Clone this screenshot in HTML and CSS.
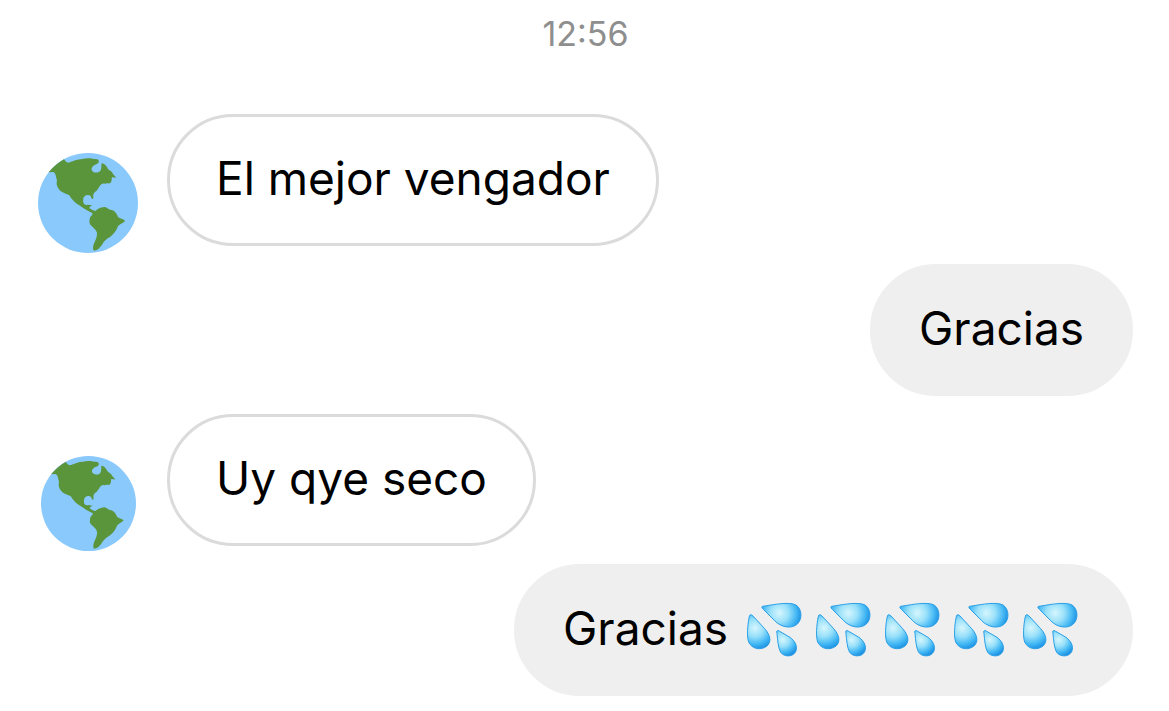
FILE: index.html
```html
<!DOCTYPE html>
<html lang="es">
<head>
<meta charset="utf-8">
<meta name="viewport" content="width=device-width, initial-scale=1">
<title>Chat</title>
<link rel="stylesheet" href="styles.css">
</head>
<body>
<svg class="defs" aria-hidden="true">
  <defs>
    <radialGradient id="water-wide" gradientUnits="userSpaceOnUse" cx="118" cy="58" r="68">
      <stop offset="0" stop-color="#d6f6fd"/>
      <stop offset="0.4" stop-color="#9be1fa"/>
      <stop offset="0.75" stop-color="#45b8f4"/>
      <stop offset="1" stop-color="#1b8de0"/>
    </radialGradient>
    <radialGradient id="water-tall" gradientUnits="userSpaceOnUse" cx="45" cy="103" r="66">
      <stop offset="0" stop-color="#d6f6fd"/>
      <stop offset="0.4" stop-color="#98e0fa"/>
      <stop offset="0.75" stop-color="#3fb6f4"/>
      <stop offset="1" stop-color="#1b8de0"/>
    </radialGradient>
    <radialGradient id="water-small" gradientUnits="userSpaceOnUse" cx="128" cy="138" r="52">
      <stop offset="0" stop-color="#d6f6fd"/>
      <stop offset="0.4" stop-color="#98e0fa"/>
      <stop offset="0.75" stop-color="#3fb6f4"/>
      <stop offset="1" stop-color="#1b8de0"/>
    </radialGradient>
    <symbol id="globe" viewBox="24 24 300 300">
      <circle cx="174" cy="174" r="150" fill="#89c9fb"/>
      <path fill="#5b953b" d="M56 82C70 65 86 52 102 43C106 47 108 53 115 53C130 49 142 42 157 42C172 37 188 41 202 43C209 46 207 54 202 56C193 59 184 65 185 74C188 84 202 85 210 79C216 73 213 63 215 55C224 56 229 63 234 72C241 78 246 79 249 87L259 98L246 97C244 103 247 108 241 114C236 117 230 113 226 117C219 114 213 117 209 124L200 137C192 142 188 147 190 157C190 164 186 163 184 158C182 150 175 149 169 151C159 154 159 164 160 172C162 181 169 180 174 179L187 181C183 184 179 184 178 189C184 194 191 197 196 198C206 188 216 187 226 186C234 189 237 195 246 195C255 198 261 207 264 216C270 221 279 222 285 227C280 235 268 237 264 244C259 258 251 267 240 276C229 282 222 289 216 299C210 308 203 315 193 317C186 313 190 304 191 298C196 286 202 276 201 263C198 252 188 247 181 239C176 232 179 226 180 217C185 213 187 209 188 205C172 198 158 188 148 181C137 176 124 162 118 151C105 144 92 142 86 131C79 123 79 113 81 105C77 96 79 86 70 81Z"/>
    </symbol>
    <symbol id="drops" viewBox="18 22 168 168">
      <g stroke="#2b9fe6" stroke-width="3" stroke-linejoin="round">
        <path fill="url(#water-wide)" d="M67 38Q63 42 70 47L104 81C123 101 154 107 172 91C188 76 186 45 168 34C149 24 105 32 75 37Z"/>
        <path fill="url(#water-tall)" d="M29 65Q32 60 39 67L74 105C90 123 96 143 81 157C63 171 36 167 26 145C20 129 23 94 27 73Z"/>
        <path fill="url(#water-small)" d="M110 113Q113 108 119 113L150 131C165 142 174 158 167 174C158 191 132 190 122 176C114 162 113 137 111 120Z"/>
      </g>
    </symbol>
  </defs>
</svg>
<main class="chat">
  <time class="stamp" datetime="12:56">12:56</time>
  <section class="messages">
    <div class="row">
      <div class="avatar"><svg class="globe" role="img" aria-label="Avatar"><use href="#globe"/></svg></div>
      <p class="bubble received">El mejor vengador</p>
    </div>
    <div class="row mine">
      <p class="bubble sent">Gracias</p>
    </div>
    <div class="row">
      <div class="avatar"><svg class="globe small" role="img" aria-label="Avatar"><use href="#globe"/></svg></div>
      <p class="bubble received">Uy qye seco</p>
    </div>
    <div class="row mine">
      <p class="bubble sent">Gracias
        <span class="emoji" role="img" aria-label="Gotas de sudor">
          <svg class="drops"><use href="#drops"/></svg>
          <svg class="drops"><use href="#drops"/></svg>
          <svg class="drops"><use href="#drops"/></svg>
          <svg class="drops"><use href="#drops"/></svg>
          <svg class="drops"><use href="#drops"/></svg>
        </span>
      </p>
    </div>
  </section>
</main>
</body>
</html>
```
FILE: styles.css
```css
* { box-sizing: border-box; }
body {
  margin: 0;
  background: #fff;
  color: #000;
  font-family: Inter, "Liberation Sans", sans-serif;
}
.defs { position: absolute; width: 0; height: 0; }
.chat {
  display: flex;
  flex-direction: column;
  padding: 14px 36px 15px 38px;
}
.stamp {
  align-self: center;
  color: #8e8e8e;
  font-size: 34px;
  line-height: 40px;
}
.messages {
  display: flex;
  flex-direction: column;
  gap: 18px;
  margin-top: 60px;
}
.row { display: flex; gap: 29px; }
.mine { justify-content: flex-end; }
.avatar {
  display: flex;
  flex: none;
  align-items: center;
  justify-content: center;
  align-self: flex-end;
  width: 100px;
  height: 100px;
  margin-bottom: -7px;
}
.globe { width: 100px; height: 100px; }
.small { width: 95px; height: 95px; }
.bubble {
  display: flex;
  align-items: center;
  gap: 18px;
  margin: 0;
  padding: 31px 46px 35px;
  border: 3px solid #dbdbdb;
  border-radius: 66px;
  font-size: 46px;
  line-height: 60px;
}
.sent { background: #efefef; border-color: #efefef; }
.emoji { display: flex; gap: 13px; padding: 2px 6px 0 0; }
.drops { width: 56px; height: 56px; }
```
